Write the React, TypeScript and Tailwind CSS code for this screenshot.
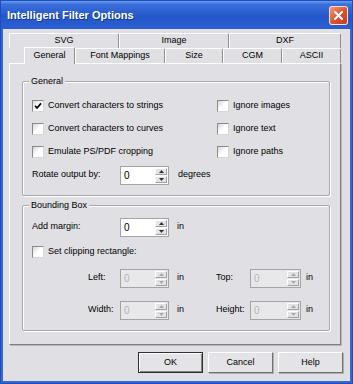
import React from "react";

function Arrow({ up, disabled }: { up?: boolean; disabled?: boolean }) {
  return (
    <svg width="5" height="3" viewBox="0 0 5 3">
      <path
        d={up ? "M0 3 L2.5 0 L5 3 Z" : "M0 0 L5 0 L2.5 3 Z"}
        fill={disabled ? "#a8a8a8" : "#303030"}
      />
    </svg>
  );
}

function Spin({ w, disabled }: { w: string; disabled?: boolean }) {
  return (
    <div
      className={`flex h-[19px] ${w} border border-[#a3a3a8] ${
        disabled ? "bg-[#e8e8ea]" : "bg-white"
      }`}
    >
      <span
        className={`flex-1 pl-[3px] leading-[17px] text-[10px] ${
          disabled ? "text-[#b4b4b8]" : "text-black"
        }`}
      >
        0
      </span>
      <div className="flex flex-col w-[12px] my-[1px] mr-[1px] gap-px">
        <div className="flex-1 flex items-center justify-center bg-[#e4e3e8] border border-t-white border-l-white border-r-[#a0a0a0] border-b-[#a0a0a0]">
          <Arrow up disabled={disabled} />
        </div>
        <div className="flex-1 flex items-center justify-center bg-[#e4e3e8] border border-t-white border-l-white border-r-[#a0a0a0] border-b-[#a0a0a0]">
          <Arrow disabled={disabled} />
        </div>
      </div>
    </div>
  );
}

function Check({ checked }: { checked?: boolean }) {
  return (
    <span className="w-[12px] h-[12px] shrink-0 flex items-center justify-center border border-t-[#8a8a8a] border-l-[#8a8a8a] border-r-[#d8d8d8] border-b-[#d8d8d8] bg-gradient-to-br from-[#d6d6da] via-white to-white">
      {checked && (
        <svg width="8" height="8" viewBox="0 0 8 8">
          <path d="M1 3.8 L3 6 L7 1.4" stroke="#000" strokeWidth="1.7" fill="none" />
        </svg>
      )}
    </span>
  );
}

function CheckRow({ label, checked }: { label: string; checked?: boolean }) {
  return (
    <div className="flex items-center gap-[4px] h-[23px]">
      <Check checked={checked} />
      <span>{label}</span>
    </div>
  );
}

function Group({ title, h, children }: { title: string; h: string; children: React.ReactNode }) {
  return (
    <div
      className={`${h} border border-[#a8a8ac] rounded-[2px] shadow-[inset_1px_1px_0_#fff,1px_1px_0_#fff]`}
    >
      <span className="block w-fit -mt-[6px] ml-[6px] px-[2px] h-[11px] leading-[11px] bg-[#e0dfe3]">
        {title}
      </span>
      <div className="pl-[9px]">{children}</div>
    </div>
  );
}

function Tab({ w, label }: { w: string; label: string }) {
  return (
    <div
      className={`${w} h-full flex items-center justify-center border-t border-l border-t-white border-l-white border-r border-r-[#8e8e92] rounded-tr-[2px] bg-[#e0dfe3]`}
    >
      {label}
    </div>
  );
}

function Btn({ label, def }: { label: string; def?: boolean }) {
  return (
    <button
      className={`w-[65px] h-[21px] bg-[#e4e3e8] flex items-center justify-center ${
        def
          ? "border border-[#303030] shadow-[inset_1px_1px_0_#fff,inset_-1px_-1px_0_#808080]"
          : "border border-t-white border-l-white border-r-[#707070] border-b-[#707070] shadow-[1px_1px_0_#b0b0b0]"
      }`}
    >
      {label}
    </button>
  );
}

export default function App() {
  return (
    <div className="w-[353px] h-[384px] flex flex-col bg-[#3566d6] border border-[#1f4db8] overflow-hidden text-[9px] text-black font-['Liberation_Sans',Arial,sans-serif]">
      {/* title bar */}
      <div className="h-[28px] shrink-0 flex items-center justify-between pl-[6px] pr-[4px] bg-[linear-gradient(to_bottom,#6b9cf0_0%,#3a6fdc_12%,#2457c9_55%,#2a5ed2_100%)]">
        <span className="text-white font-bold text-[11px] [text-shadow:1px_1px_0_#163a94]">
          Intelligent Filter Options
        </span>
        <div className="w-[19px] h-[19px] rounded-[3px] border border-white/80 bg-[linear-gradient(135deg,#f29a7a,#d5532d_55%,#c13f1c)] flex items-center justify-center">
          <svg width="11" height="11" viewBox="0 0 11 11">
            <path d="M2 2 L9 9 M9 2 L2 9" stroke="#fff" strokeWidth="2" strokeLinecap="round" />
          </svg>
        </div>
      </div>

      {/* body */}
      <div className="flex-1 mx-[2px] mb-[2px] bg-[#e0dfe3] flex flex-col pt-[4px] pl-[6px]">
        {/* tabs */}
        <div className="w-[332px] h-[15px] flex">
          <Tab w="w-[110px]" label="SVG" />
          <Tab w="w-[110px]" label="Image" />
          <Tab w="w-[112px]" label="DXF" />
        </div>
        <div className="w-[332px] h-[15px] flex pl-[15px] relative z-10">
          <div className="w-[51px] h-[17px] -mt-[1px] flex items-center justify-center border-t border-l border-t-white border-l-white border-r border-r-[#8e8e92] rounded-tr-[2px] bg-[#e0dfe3]">
            General
          </div>
          <Tab w="w-[90px]" label="Font Mappings" />
          <Tab w="w-[58px]" label="Size" />
          <Tab w="w-[59px]" label="CGM" />
          <Tab w="w-[59px]" label="ASCII" />
        </div>

        {/* panel */}
        <div className="w-[332px] h-[282px] border border-t-white border-l-white border-r-[#808084] border-b-[#808084] shadow-[1px_1px_0_#b8b8bc] pl-[12px] pr-[10px] pt-[17px]">
          <Group title="General" h="h-[115px]">
            <div className="mt-[7px] grid grid-cols-[185px_1fr]">
              <CheckRow label="Convert characters to strings" checked />
              <CheckRow label="Ignore images" />
              <CheckRow label="Convert characters to curves" />
              <CheckRow label="Ignore text" />
              <CheckRow label="Emulate PS/PDF cropping" />
              <CheckRow label="Ignore paths" />
            </div>
            <div className="flex items-center h-[24px]">
              <span className="w-[88px]">Rotate output by:</span>
              <Spin w="w-[49px]" />
              <span className="ml-[9px]">degrees</span>
            </div>
          </Group>

          <div className="mt-[9px]">
            <Group title="Bounding Box" h="h-[126px]">
              <div className="mt-[5px] h-[22px] flex items-center">
                <span className="w-[88px]">Add margin:</span>
                <Spin w="w-[49px]" />
                <span className="ml-[8px]">in</span>
              </div>
              <div className="h-[28px] flex items-center gap-[4px]">
                <Check />
                <span>Set clipping rectangle:</span>
              </div>
              <div className="h-[24px] flex items-center pl-[56px]">
                <span className="w-[32px]">Left:</span>
                <Spin w="w-[49px]" disabled />
                <span className="w-[47px] pl-[8px]">in</span>
                <span className="w-[34px]">Top:</span>
                <Spin w="w-[51px]" disabled />
                <span className="ml-[5px]">in</span>
              </div>
              <div className="mt-[8px] h-[24px] flex items-center pl-[56px]">
                <span className="w-[32px]">Width:</span>
                <Spin w="w-[49px]" disabled />
                <span className="w-[47px] pl-[8px]">in</span>
                <span className="w-[34px]">Height:</span>
                <Spin w="w-[51px]" disabled />
                <span className="ml-[5px]">in</span>
              </div>
            </Group>
          </div>
        </div>

        {/* buttons */}
        <div className="w-[334px] mt-[7px] flex justify-end gap-[5px]">
          <Btn label="OK" def />
          <Btn label="Cancel" />
          <Btn label="Help" />
        </div>
      </div>
    </div>
  );
}
